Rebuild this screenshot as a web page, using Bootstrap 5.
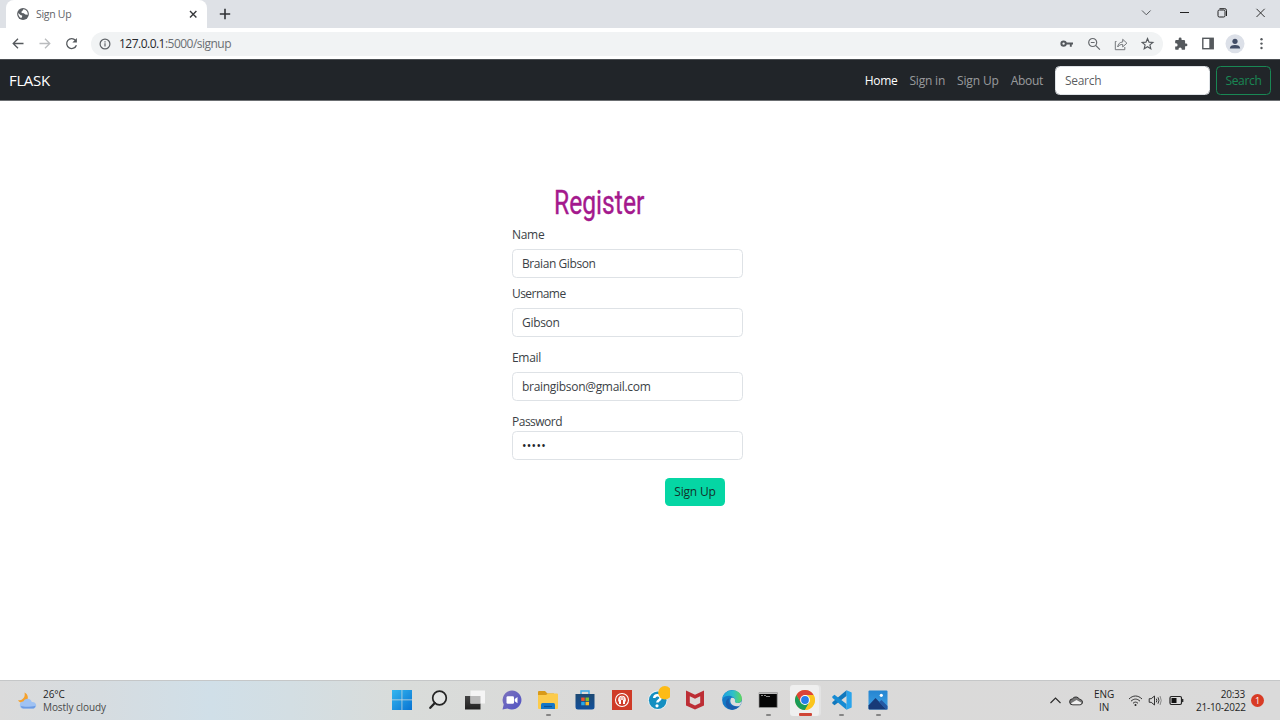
<!DOCTYPE html>
<html lang="en">
<head>
<meta charset="utf-8">
<meta name="viewport" content="width=device-width, initial-scale=1">
<title>Sign Up</title>
<link href="https://cdn.jsdelivr.net/npm/bootstrap@5.3.0/dist/css/bootstrap.min.css" rel="stylesheet">
<style>
html{font-size:12px}
body{font-family:"Open Sans","Noto Sans",sans-serif;height:720px;overflow:hidden;letter-spacing:-.3px;background:#fff}
svg{display:block;flex:none}
.tabstrip{height:28px;background:#dee1e6}
.tab-active{width:201px;height:28px;margin-left:6px;border-radius:8px 8px 0 0;font-size:10.5px;color:#5f6368;padding:0 8px 0 11px}
.win-ctl svg{margin-left:22px}
.toolbar{height:31px}
.omnibox{height:24px;border-radius:12px;background:#f1f3f4;color:#6b6f73;margin-left:12px;width:1072px;padding:0 8px 0 8px}
.omnibox b{font-weight:400;color:#27292c}
.url{letter-spacing:-.52px}
.site-nav{height:42px;background:#212529!important;border-top:1px solid #4b4e52;border-bottom:1px solid #6b6e71}
.site-nav .navbar-brand{font-size:15px;letter-spacing:-.35px;margin:0}
.site-nav .nav-link{padding:2px 6px 0!important;line-height:18px}
.form-control{height:29px;padding:4px 9px;letter-spacing:inherit;border-radius:4.5px}
.site-nav .form-control{width:155px;margin:0 6px}
.site-nav .btn{width:55px;height:29px;padding:1px 0 0;border-radius:4.5px;letter-spacing:-.3px}
.page-area{height:579px}
.signup{width:231px;margin-left:512px;padding-top:80px;color:#3b3f46}
.signup h1{font-family:Roboto,sans-serif;font-size:34px;font-weight:400;line-height:42px;color:#a4198d;-webkit-text-stroke:.4px #a4198d;letter-spacing:0;width:130px;margin:0 0 3px 42px;transform:scaleX(.725);transform-origin:0 50%}
.signup .form-label{display:block;line-height:18px;margin:0 0 5px}
.signup .form-control{color:#3b3f46}
.signup #name{letter-spacing:-.42px}
.signup #pass{letter-spacing:.3px;color:#212529}
.btn-join{background:#05d6a4;color:#14302b;width:60px;height:28px;padding:0;border-radius:4.5px;margin:18px 0 0 153px;letter-spacing:-.2px;display:block}
.btn-join:hover{background:#05c497}
.taskbar{height:40px;border-top:1px solid #c5c7c8;background:linear-gradient(90deg,#dbdbdb 0,#d6dce0 100px,#d0dfe8 210px,#d3dee3 290px,#d9dcda 400px,#dad9d8 620px,#dadada 1280px);color:#1f1f1f;font-size:10px;line-height:13px;letter-spacing:-.25px}
.weather{width:383.5px;padding-left:17px;letter-spacing:-.08px}
.task{width:36.67px;height:39px;position:relative}
.task.open::after{content:"";position:absolute;left:16px;top:33px;width:5px;height:2px;border-radius:1px;background:#858585}
.task.current::before{content:"";position:absolute;left:3px;top:4px;width:29px;height:31px;border-radius:3px;background:#efefef;box-shadow:2px 0 0 #e3e3e3}
.task.current::after{left:12px;top:32px;width:13px;height:3px;background:#cf4536}
.task svg{position:relative;top:-.5px}
.notice{width:13px;height:13px;background:#d83b25;color:#fff;font-size:9px;line-height:13px}
</style>
</head>
<body>
<header>
  <div class="tabstrip d-flex align-items-center">
    <div class="tab-active bg-white d-flex align-items-center">
      <svg width="12" height="12" viewBox="0 0 12 12"><circle cx="6" cy="6" r="5.9" fill="#5b5f64"/><path d="M1.200 5l2.600 2.200 1.400.4-.2 1.600-1 .9C2.300 9.200 1.200 7.300 1.200 5zM6.400 1.300l-.9 1.500-1.100.9.3 1.400 2.100.1 1.500 1.300 2.500.3C11 4 9.200 1.600 6.400 1.300z" fill="#fff"/></svg>
      <span class="flex-grow-1" style="margin-left:7px;padding-top:1px">Sign Up</span>
      <svg width="12" height="12" viewBox="0 0 12 12"><path d="M3 3l6.400 6.400M9.400 3L3 9.400" stroke="#37393c" stroke-width="1.400"/></svg>
    </div>
    <svg style="margin-left:8px" width="20" height="20" viewBox="0 0 20 20"><path d="M10 4.800v10.400M4.800 10h10.400" stroke="#303236" stroke-width="1.600" transform="translate(0.000)"/></svg>
    <div class="win-ctl d-flex ms-auto align-items-center" style="padding-right:12px">
      <svg width="16" height="16" viewBox="0 0 16 16" fill="none" stroke="#55585c"><path d="M4 4.500L8.300 8.800 12.600 4.500"/></svg>
      <svg width="16" height="16" viewBox="0 0 16 16"><path d="M4 6.500h9" stroke="#222"/></svg>
      <svg width="16" height="16" viewBox="0 0 16 16" fill="none" stroke="#222"><rect x="4" y="4" width="7" height="7" rx="1.300"/><path d="M5.500 2.700h5.300q1.700 0 1.700 1.700v5.600"/></svg>
      <svg width="16" height="16" viewBox="0 0 16 16" stroke="#333"><path d="M4.500 2.800l8.200 8.200M12.700 2.800l-8.200 8.200"/></svg>
    </div>
  </div>
  <div class="toolbar bg-white d-flex align-items-center">
    <svg style="margin-left:11px" width="14" height="14" viewBox="0 0 14 14" fill="none" stroke="#55595d" stroke-width="1.300"><path d="M12.500 6.500H2.300M7 1.700L2.200 6.500 7 11.300"/></svg>
    <svg style="margin-left:13px" width="14" height="14" viewBox="0 0 14 14" fill="none" stroke="#babcbe" stroke-width="1.300"><path d="M1.500 6.500h10.200M7 1.700L11.800 6.500 7 11.300"/></svg>
    <svg style="margin-left:12px" width="15" height="15" viewBox="0 0 15 15" fill="none" stroke="#55595d" stroke-width="1.300"><path d="M12.400 9.200a5 5 0 1 1-.9-4.900"/><path d="M12.900 1.900v4.500H8.400z" fill="#55595d" stroke="none"/></svg>
    <div class="omnibox d-flex align-items-center">
      <svg width="12" height="12" viewBox="0 0 12 12"><circle cx="6" cy="6" r="4.900" fill="none" stroke="#5f6368" stroke-width="1.200"/><path d="M6 5.300v3.300M6 3.200v1.200" stroke="#5f6368" stroke-width="1.200"/></svg>
      <span class="flex-grow-1 url" style="margin-left:8px"><b>127.0.0.1</b>:5000/signup</span>
      <svg width="14" height="14" viewBox="0 0 14 14"><circle cx="3.600" cy="6.600" r="2.200" fill="none" stroke="#55595d" stroke-width="2"/><path d="M5.500 6.500h7.500M10.800 6.500v3.200" stroke="#55595d" stroke-width="1.900"/></svg>
      <svg style="margin-left:13px" width="14" height="14" viewBox="0 0 14 14" fill="none" stroke="#66696d" stroke-width="1.200"><circle cx="5.700" cy="5.500" r="4"/><path d="M8.600 8.400l4.300 4.300M3.800 5.500h3.800"/></svg>
      <svg style="margin-left:13px" width="14" height="14" viewBox="0 0 14 14" fill="none" stroke="#74777b" stroke-linejoin="round"><path d="M2.500 4.500H1.300v8.200h9.500V10M3.700 10c.4-3.200 2-4.800 5-5V2.300l4.200 3.900-4.200 3.700V7.400c-2.200 0-3.700.7-5 2.600z"/></svg>
      <svg style="margin-left:13px" width="14" height="14" viewBox="0 0 14 14" fill="none" stroke="#55595d" stroke-width="1.150"><path d="M6.500 1.500l1.500 3.600 3.900.3-3 2.500.9 3.800-3.300-2-3.300 2 .9-3.800-3-2.500 3.900-.3z"/></svg>
    </div>
    <svg style="margin-left:11px" width="14" height="14" viewBox="0 0 24 24" fill="#55595d"><path d="M20.500 11H19V7a2 2 0 0 0-2-2h-4V3.500a2.500 2.500 0 0 0-5 0V5H4a2 2 0 0 0-2 2v3.800h1.500a2.700 2.700 0 0 1 0 5.400H2V20a2 2 0 0 0 2 2h3.800v-1.500a2.700 2.700 0 0 1 5.400 0V22H17a2 2 0 0 0 2-2v-4h1.500a2.500 2.500 0 0 0 0-5z"/></svg>
    <svg style="margin-left:13px" width="14" height="14" viewBox="0 0 14 14"><rect x="1.800" y="1.300" width="10.400" height="10.400" fill="none" stroke="#55595d" stroke-width="1.400"/><path d="M8.300 1.500h4v10.500h-4z" fill="#55595d"/></svg>
    <svg style="margin-left:10px" width="20" height="20" viewBox="0 0 20 20"><circle cx="10" cy="9.800" r="9.500" fill="#dce0e8"/><circle cx="10" cy="7.300" r="2.600" fill="#414c65"/><path d="M4.800 14.500c0-2.500 2-3.500 5.200-3.500s5.200 1 5.200 3.500z" fill="#414c65"/></svg>
    <svg style="margin-left:9px" width="14" height="14" viewBox="0 0 14 14" fill="#55595d"><circle cx="7.500" cy="2.300" r="1.200"/><circle cx="7.500" cy="6.600" r="1.200"/><circle cx="7.500" cy="11" r="1.200"/></svg>
  </div>
</header>

<nav class="site-nav navbar navbar-expand navbar-dark p-0">
  <div class="container-fluid" style="padding:0 9px">
    <a class="navbar-brand p-0" href="#">FLASK</a>
    <div class="d-flex align-items-center">
      <ul class="navbar-nav">
        <li class="nav-item"><a class="nav-link active" href="#">Home</a></li>
        <li class="nav-item"><a class="nav-link" href="#" style="letter-spacing:-.2px">Sign in</a></li>
        <li class="nav-item"><a class="nav-link" href="#" style="letter-spacing:-.15px">Sign Up</a></li>
        <li class="nav-item"><a class="nav-link" href="#">About</a></li>
      </ul>
      <form class="d-flex" role="search">
        <input class="form-control" type="search" placeholder="Search" aria-label="Search">
        <button class="btn btn-outline-success" type="button">Search</button>
      </form>
    </div>
  </div>
</nav>

<main class="page-area">
  <form class="signup">
    <h1>Register</h1>
    <label class="form-label" for="name">Name</label>
    <input class="form-control" id="name" value="Braian Gibson">
    <label class="form-label" for="user" style="margin-top:7px;letter-spacing:-.55px">Username</label>
    <input class="form-control" id="user" value="Gibson">
    <label class="form-label" for="email" style="margin-top:12px">Email</label>
    <input class="form-control" id="email" value="braingibson@gmail.com">
    <label class="form-label mb-0" for="pass" style="margin-top:12px;letter-spacing:-.5px">Password</label>
    <input class="form-control" id="pass" type="password" value="12345">
    <button class="btn btn-join" type="button">Sign Up</button>
  </form>
</main>

<footer class="taskbar d-flex align-items-center">
  <div class="weather d-flex align-items-center">
    <svg width="20" height="20" viewBox="0 0 20 20"><path d="M7.500 1.500c1 4-1 8-6.500 7.800 2 3 6 3.700 8.500 1.200 2.500-3 1.500-7.500-2-9z" fill="#f5a12c"/><path d="M6.500 17.500a3.500 3.500 0 0 1-.3-7 4.600 4.600 0 0 1 8.600.6c5.500-.3 5.700 6.400 1.200 6.400z" fill="#9fc2f3"/><path d="M4 15c3 1.200 10 1 14.500-.3-.5 2-1.500 2.800-3 2.800H6.500C5 17.500 4 16.500 4 15z" fill="#6c9be3"/></svg>
    <div style="margin-left:6px">26°C<br><span style="color:#4a4a4a">Mostly cloudy</span></div>
  </div>
  <div class="task d-flex align-items-center justify-content-center"><svg width="20" height="20" viewBox="0 0 20 20"><defs><linearGradient id="win" x2="1" y2="1"><stop stop-color="#35b7ef"/><stop offset="1" stop-color="#0873d2"/></linearGradient></defs><path d="M0 0h9.600v9.600H0zM10.300 0H20v9.600h-9.700zM0 10.300h9.600V20H0zM10.300 10.300H20V20h-9.700z" fill="url(#win)"/></svg></div>
  <div class="task d-flex align-items-center justify-content-center"><svg width="20" height="20" viewBox="0 0 20 20" fill="none" stroke="#242424"><circle cx="11.500" cy="8" r="6.800" stroke-width="1.700" fill="#e3e5e4"/><path d="M6.800 13L2.300 17.800" stroke-width="2.300" stroke-linecap="round"/></svg></div>
  <div class="task d-flex align-items-center justify-content-center"><svg width="20" height="20" viewBox="0 0 20 20"><defs><linearGradient id="desk" x2="0" y2="1"><stop stop-color="#444"/><stop offset="1" stop-color="#202020"/></linearGradient></defs><path d="M0 6h15.500v13.500H0z" fill="url(#desk)"/><path d="M5.500 .5H20v13H5.500z" fill="#f5f5f5"/><path d="M5.500 6h10v7.500h-10z" fill="#bbb"/></svg></div>
  <div class="task d-flex align-items-center justify-content-center"><svg width="20" height="20" viewBox="0 0 20 20"><defs><linearGradient id="chat" x2="1" y2="1"><stop stop-color="#7d73bd"/><stop offset="1" stop-color="#5053c4"/></linearGradient></defs><path d="M10 .5a9.500 9.500 0 1 1-4.500 17.900L.5 19.500l1.200-5A9.500 9.500 0 0 1 10 .5z" fill="url(#chat)"/><rect x="4.500" y="6.300" width="7.500" height="7.400" rx="1.300" fill="#fff"/><path d="M12.700 9l2.800-2v6.200l-2.800-2z" fill="#fff"/></svg></div>
  <div class="task open d-flex align-items-center justify-content-center"><svg width="20" height="20" viewBox="0 0 20 20"><path d="M0 2q0-1 1-1h6l2.500 2.500H16V7H0z" fill="#d99a18"/><path d="M0 5h8l2-1.500h9q1 0 1 1V18q0 1-1 1H1q-1 0-1-1z" fill="#fccb4b"/><path d="M3 19v-4.500q0-1.500 1.500-1.500h11q1.500 0 1.500 1.500V19z" fill="#1477c7"/><path d="M6 16.500h8" stroke="#0b4f93" stroke-width="1.200"/></svg></div>
  <div class="task d-flex align-items-center justify-content-center"><svg width="20" height="20" viewBox="0 0 20 20"><defs><linearGradient id="bag" x2="0" y2="1"><stop stop-color="#1d4973"/><stop offset="1" stop-color="#12509b"/></linearGradient></defs><path d="M6 4.500V1h8v3.500" fill="none" stroke="#39a9e8" stroke-width="1.400"/><path d="M.5 4h19v13q0 2.500-2.500 2.500H3Q.5 19.500.5 17z" fill="url(#bag)"/><path d="M6.200 7.500h3.500V11H6.200z" fill="#f0512b"/><path d="M10.500 7.500H14V11h-3.500z" fill="#7fbb2f"/><path d="M6.200 11.800h3.500v3.500H6.200z" fill="#29a8e8"/><path d="M10.500 11.800H14v3.500h-3.500z" fill="#fcba25"/></svg></div>
  <div class="task d-flex align-items-center justify-content-center"><svg width="20" height="20" viewBox="0 0 20 20"><path d="M0 0h20v20H0z" fill="#cf3b28"/><circle cx="10" cy="10" r="6.500" fill="none" stroke="#fff" stroke-width="1.100"/><path d="M6.200 11.500V9.500a3.800 3.800 0 0 1 7.600 0v2H13V14h-2v-3.800q-1-1.200-2 0V14H7v-2.500z" fill="#fff"/><path d="M8.300 7v3M10 6v3M11.700 7v3" stroke="#cf3b28" stroke-width=".5"/></svg></div>
  <div class="task d-flex align-items-center justify-content-center"><svg width="24" height="28" viewBox="0 0 24 28"><circle cx="11.700" cy="14.200" r="9.700" fill="#e8f2f6"/><circle cx="11.700" cy="14.200" r="8.800" fill="#148fc1"/><path d="M8.200 12c.3-4 6.800-3.700 6.300.3-.3 2-3 2-3.200 4.200" fill="none" stroke="#fff" stroke-width="2.500"/><circle cx="11" cy="19.800" r="1.600" fill="#fff"/><circle cx="18.900" cy="6.700" r="6.700" fill="#fdbb16"/></svg></div>
  <div class="task d-flex align-items-center justify-content-center"><svg width="20" height="20" viewBox="0 0 20 20"><path d="M1 .5l9 4.300L19 .5v15l-9 4-9-4z" fill="#bd2e35"/><path d="M4.800 6.300L10 8.800l5.200-2.500v6.800L10 15.500l-5.200-2.400z" fill="#dedad9"/></svg></div>
  <div class="task d-flex align-items-center justify-content-center"><svg width="20" height="20" viewBox="0 0 20 20"><defs><linearGradient id="edgeA" x2="1"><stop stop-color="#1e9fe0"/><stop offset=".55" stop-color="#2fbfca"/><stop offset="1" stop-color="#5fd85a"/></linearGradient></defs><circle cx="10" cy="10" r="9.900" fill="#1479c6"/><path d="M.2 9C1.500-2.200 19-3 19.900 8.500c.2 3.500-2.700 5-6 4.600-1.800-.4-.9-1.300-.9-3C12.300 5.500 4 3.800.2 9z" fill="url(#edgeA)"/><path d="M7.500 8c-2.700 4.500 1.500 10 9.800 7.800-3.300 5.200-11.500 5.300-13.300-.8C3.300 11.800 4.500 9 7.500 8z" fill="#1a5dac"/><path d="M9 8.200c2-1.300 4.500.3 4 2.600-.4 1.500.7 2.300 2.500 2.300 2 0 3.500-.8 4.300-1.900-.4 2-1.300 3.600-2.500 4.700C11 17.700 6.500 12.500 9 8.200z" fill="#dddddd"/></svg></div>
  <div class="task open d-flex align-items-center justify-content-center"><svg width="20" height="20" viewBox="0 0 20 20"><path d="M1 2.500h18.200v15H1z" fill="#060606" stroke="#999" stroke-width=".7"/><path d="M1 2.500h18v1.500H1z" fill="#bdbdbd"/><path d="M3 5.500h2M6 5.500h2M8 6.500h4" stroke="#aaa" stroke-width=".8"/></svg></div>
  <div class="task open current d-flex align-items-center justify-content-center"><svg width="20" height="20" viewBox="0 0 20 20"><circle cx="10" cy="10" r="9.900" fill="#fbc51d"/><path d="M1.400 5A9.900 9.900 0 0 1 18.600 5H10L5.700 12.500z" fill="#db4337"/><path d="M1.400 5a9.900 9.900 0 0 0 8.600 14.900L14.300 12.500H5.700z" fill="#1b9c58"/><path d="M10 5h8.600a9.900 9.900 0 0 1-8.600 14.900l4.300-7.400z" fill="#fbc51d"/><circle cx="10" cy="10" r="4.900" fill="#fff"/><circle cx="10" cy="10" r="3.900" fill="#287de9"/></svg></div>
  <div class="task open d-flex align-items-center justify-content-center"><svg width="20" height="20" viewBox="0 0 20 20"><path d="M14.500.3L19.700 2.500v15l-5.200 2.200z" fill="#29a4ec"/><path d="M14.500.3v5.800L2.500 15.300.3 13.500v-1.200z" fill="#1178bd"/><path d="M14.500 19.700v-5.800L2.500 4.700.3 6.500v1.200z" fill="#168bd3"/></svg></div>
  <div class="task open d-flex align-items-center justify-content-center"><svg width="20" height="20" viewBox="0 0 20 20"><defs><linearGradient id="photo" x2="0" y2="1"><stop stop-color="#2585d1"/><stop offset="1" stop-color="#3ea1e4"/></linearGradient></defs><rect x=".5" y=".5" width="19" height="19" rx="1" fill="url(#photo)"/><path d="M.5 15.500L7.500 8l11 11.500h-17q-1 0-1-1z" fill="#173a78"/><path d="M11 12l2.500-2 6 6v3.500h-1.500z" fill="#2458a3"/><circle cx="13.300" cy="5.300" r="1.600" fill="#fff"/></svg></div>
  <div class="d-flex align-items-center ms-auto" style="padding-right:16px">
    <svg width="12" height="12" viewBox="0 0 12 12" fill="none" stroke="#2a2a2a" stroke-width="1.100"><path d="M1.500 8l5-5 5 5"/></svg>
    <svg style="margin-left:8px" width="14" height="12" viewBox="0 0 14 12"><path d="M3.800 9.800a3 3 0 0 1-.3-6 4 4 0 0 1 7 .5c4 .3 4 5.500 0 5.500z" fill="#777" stroke="#2e2e2e"/><path d="M2 8.300L7.500 5l5 2.700q-.5 1.600-2 1.600H3.800Q2.500 9.300 2 8.300z" fill="#f1f1f1"/></svg>
    <div class="text-center lang" style="margin-left:11px;width:20px;letter-spacing:-.1px">ENG<br>IN</div>
    <svg style="margin-left:14px" width="15" height="14" viewBox="0 0 15 14" fill="none" stroke="#333"><path d="M1 5c4-4 9-4 13 0M3 7.200c3-2.800 6-2.800 9 0M5 9.300c1.800-1.600 3.200-1.600 5 0"/><circle cx="7.500" cy="11" r="1" fill="#222" stroke="none"/></svg>
    <svg style="margin-left:5px" width="15" height="14" viewBox="0 0 15 14" fill="none" stroke="#333"><path d="M1.200 4.700h2L6.500 2v9L3.200 8.300h-2z"/><path d="M8.300 4.700q1 1.800 0 3.600M10 3.300q1.900 3.200 0 6.400"/><path d="M12 2q2.500 4.500 0 9" stroke="#888"/></svg>
    <svg style="margin-left:6px" width="15" height="12" viewBox="0 0 15 12"><rect x="1" y="1.500" width="11.500" height="8" rx="1.500" fill="none" stroke="#222" stroke-width="1.200"/><path d="M2.500 3h5v5h-5z" fill="#111"/><path d="M13.700 4v3" stroke="#222" stroke-width="1.300"/></svg>
    <div class="text-end clock" style="margin-left:12px;width:49px;white-space:nowrap">20:33<br>21-10-2022</div>
    <div class="notice rounded-circle text-center" style="margin-left:6px">1</div>
  </div>
</footer>
<script src="https://cdn.jsdelivr.net/npm/bootstrap@5.3.0/dist/js/bootstrap.bundle.min.js"></script>
</body>
</html>
